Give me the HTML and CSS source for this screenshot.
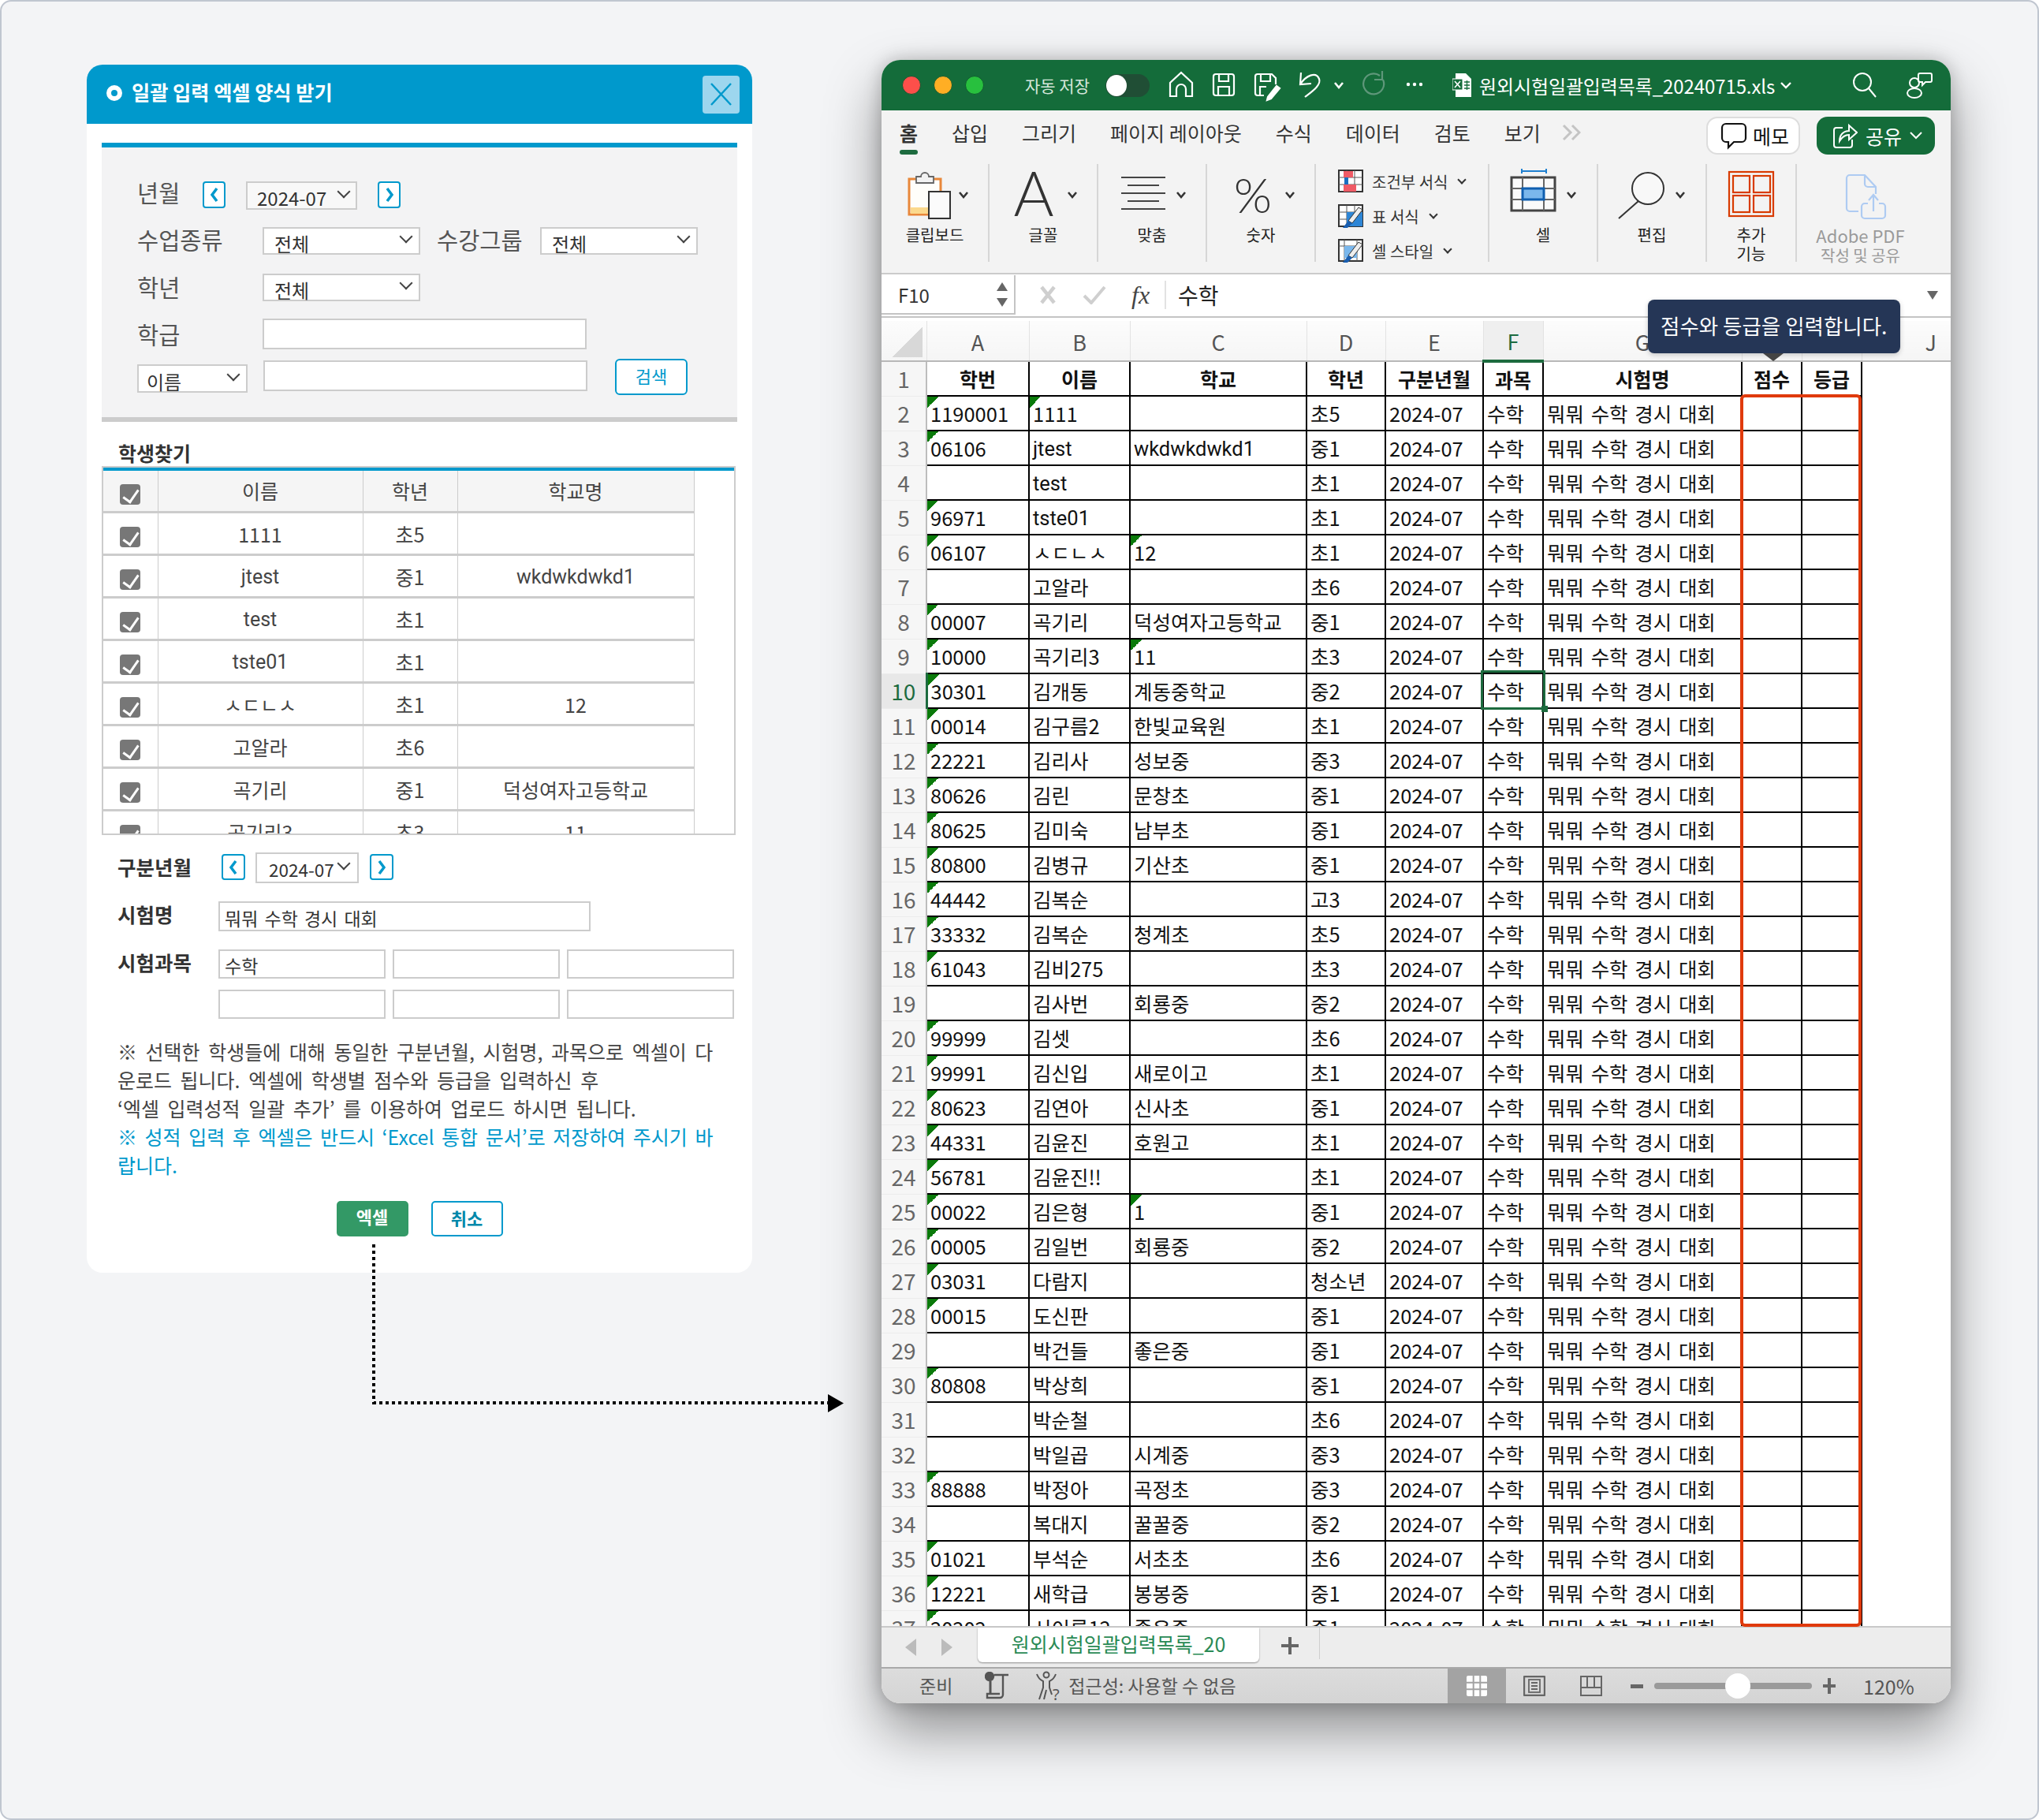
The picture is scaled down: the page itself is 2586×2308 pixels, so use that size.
FILE: index.html
```html
<!DOCTYPE html>
<html>
<head>
	<meta charset="UTF-8">
	<title>일괄 입력 엑셀 양식</title>
	<link rel="stylesheet" href="styles.css">
</head>
<body>
<div class="page">

	<!-- 왼쪽: 엑셀 양식 받기 팝업 -->
	<div class="dialog">
		<div class="dlg-head">
			<i class="dlg-dot"></i>
			<span class="dlg-title">일괄 입력 엑셀 양식 받기</span>
			<span class="dlg-close">
				<svg width="31" height="31" viewBox="0 0 31 31"><path d="M3 2 L28 29 M28 2 L3 29" stroke="#0099cc" stroke-width="2.5" fill="none"/></svg>
			</span>
		</div>

		<div class="search">
			<div class="frow">
				<label class="lab lab-ym">년월</label>
				<a class="nav-btn">
					<svg width="14" height="22" viewBox="0 0 14 22"><path d="M10 3 L4 11 L10 19" stroke="#0099cc" stroke-width="3.5" fill="none"/></svg>
				</a>
				<div class="sel sel-ym"><span>2024-07</span></div>
				<a class="nav-btn nav-next">
					<svg width="14" height="22" viewBox="0 0 14 22"><path d="M4 3 L10 11 L4 19" stroke="#0099cc" stroke-width="3.5" fill="none"/></svg>
				</a>
			</div>
			<div class="frow">
				<label class="lab lab-wide">수업종류</label>
				<div class="sel sel-md"><span>전체</span></div>
				<label class="lab lab-group">수강그룹</label>
				<div class="sel sel-md"><span>전체</span></div>
			</div>
			<div class="frow">
				<label class="lab lab-wide">학년</label>
				<div class="sel sel-md"><span>전체</span></div>
			</div>
			<div class="frow">
				<label class="lab lab-wide">학급</label>
				<div class="inp inp-search"></div>
			</div>
			<div class="frow">
				<div class="sel sel-name"><span>이름</span></div>
				<div class="inp inp-search inp-name"></div>
				<a class="btn-search">검색</a>
			</div>
		</div>

		<div class="sec-title">학생찾기</div>
		<div class="finder">
			<table>
				<colgroup><col class="c-chk"><col class="c-name"><col class="c-grade"><col class="c-school"></colgroup>
				<thead>
					<tr><th><i class="cb"></i></th><th>이름</th><th>학년</th><th>학교명</th></tr>
				</thead>
				<tbody>
					<tr><td><i class="cb"></i></td><td>1111</td><td>초5</td><td></td></tr>
					<tr><td><i class="cb"></i></td><td><span class="lat">jtest</span></td><td>중1</td><td><span class="lat">wkdwkdwkd1</span></td></tr>
					<tr><td><i class="cb"></i></td><td><span class="lat">test</span></td><td>초1</td><td></td></tr>
					<tr><td><i class="cb"></i></td><td><span class="lat">tste01</span></td><td>초1</td><td></td></tr>
					<tr><td><i class="cb"></i></td><td>ㅅㄷㄴㅅ</td><td>초1</td><td>12</td></tr>
					<tr><td><i class="cb"></i></td><td>고알라</td><td>초6</td><td></td></tr>
					<tr><td><i class="cb"></i></td><td>곡기리</td><td>중1</td><td>덕성여자고등학교</td></tr>
					<tr><td><i class="cb"></i></td><td>곡기리3</td><td>초3</td><td>11</td></tr>
				</tbody>
			</table>
		</div>

		<div class="send">
			<div class="srow srow-ym">
				<label class="slab">구분년월</label>
				<a class="nav-btn nav-sm">
					<svg width="14" height="22" viewBox="0 0 14 22"><path d="M10 3 L4 11 L10 19" stroke="#0099cc" stroke-width="3.5" fill="none"/></svg>
				</a>
				<div class="sel sel-ym2"><span>2024-07</span></div>
				<a class="nav-btn nav-sm nav-next2">
					<svg width="14" height="22" viewBox="0 0 14 22"><path d="M4 3 L10 11 L4 19" stroke="#0099cc" stroke-width="3.5" fill="none"/></svg>
				</a>
			</div>
			<div class="srow srow-exam">
				<label class="slab slab-in">시험명</label>
				<div class="inp inp-exam">뭐뭐 수학 경시 대회</div>
			</div>
			<div class="srow srow-sub">
				<label class="slab slab-in">시험과목</label>
				<div class="sub-grid">
					<div class="inp inp-sub">수학</div>
					<div class="inp inp-sub"></div>
					<div class="inp inp-sub"></div>
					<div class="inp inp-sub"></div>
					<div class="inp inp-sub"></div>
					<div class="inp inp-sub"></div>
				</div>
			</div>
			<p class="note">※ 선택한 학생들에 대해 동일한 구분년월, 시험명, 과목으로 엑셀이 다<br>운로드 됩니다. 엑셀에 학생별 점수와 등급을 입력하신 후<br>‘엑셀 입력성적 일괄 추가’ 를 이용하여 업로드 하시면 됩니다.<br><span class="note-blue">※ 성적 입력 후 엑셀은 반드시 ‘Excel 통합 문서’로 저장하여 주시기 바<br>랍니다.</span></p>
			<div class="btns">
				<a class="btn btn-xls">엑셀</a>
				<a class="btn btn-cancel">취소</a>
			</div>
		</div>
	</div>

	<!-- 오른쪽: 엑셀 창 -->
	<div class="win">
		<div class="titlebar">
			<i class="light l-red"></i><i class="light l-yel"></i><i class="light l-grn"></i>
			<span class="autosave">자동 저장</span>
			<span class="toggle"><i></i></span>
			<svg class="qat" width="340" height="64" viewBox="0 0 340 64" fill="none" stroke="#fff" stroke-width="2.2">
				<path d="M4 46 V29 L18 16 L32 29 V46 H24 V37 a6 6 0 0 0 -12 0 V46 Z"/>
				<rect x="59" y="18" width="26" height="27" rx="3"/>
				<path d="M66 18 V27 H78 V18 M65 45 V34 H79 V45"/>
				<path d="M123 45 H115 a3 3 0 0 1 -3 -3 V21 a3 3 0 0 1 3 -3 H133 l5 5 V31 M119 18 V27 H131 V18 M118 45 V34 H126"/>
				<path d="M128 47 L139 33 L143 36 L132 49 L127 51 Z" fill="#fff"/>
				<path d="M170 16 L169 31 L183 30 M169 31 C176 20 189 14 193 24 C196 32 184 40 175 47"/>
				<path d="M213 29 l5 6 5-6" stroke-width="2.6"/>
				<path d="M270 20 a13 13 0 1 0 4 5 M273 14 V25 H263" stroke="#5f977a"/>
				<circle cx="306" cy="31" r="2.2" fill="#fff" stroke="none"/><circle cx="314" cy="31" r="2.2" fill="#fff" stroke="none"/><circle cx="322" cy="31" r="2.2" fill="#fff" stroke="none"/>
			</svg>
			<svg class="xlfile" width="24" height="30" viewBox="0 0 24 30">
				<path d="M4 0 H17 L24 7 V30 H4 Z" fill="#fff"/>
				<rect x="0" y="7" width="13" height="14" fill="#146c3a" stroke="#fff"/>
				<path d="M3 10 L10 18 M10 10 L3 18" stroke="#fff" stroke-width="1.6"/>
				<path d="M15 11 H22 M15 15 H22 M15 19 H22 M18.500 9 V21" stroke="#146c3a" stroke-width="1.3"/>
			</svg>
			<span class="filename">원외시험일괄입력목록_20240715.xls</span>
			<svg class="fchev" width="16" height="10" viewBox="0 0 16 10"><path d="M2 2 L8 8 L14 2" stroke="#fff" stroke-width="2.4" fill="none"/></svg>
			<svg class="tsearch" width="32" height="34" viewBox="0 0 32 34" fill="none" stroke="#fff" stroke-width="2"><circle cx="13" cy="13" r="11"/><path d="M21 21 L30 32"/></svg>
			<svg class="tperson" width="34" height="34" viewBox="0 0 34 34" fill="none" stroke="#fff" stroke-width="2"><circle cx="11" cy="14" r="6"/><path d="M2 27 a9 6 0 0 1 18 0 a9 6 0 0 1 -18 0 Z"/><path d="M18 2 H31 a2 2 0 0 1 2 2 V11 a2 2 0 0 1 -2 2 H25 L21 17 V13 H18 a2 2 0 0 1 -2 -2 V4 a2 2 0 0 1 2 -2 Z"/></svg>
		</div>

		<div class="ribbon">
			<div class="tabs">
				<span class="tab tab-on">홈</span>
				<span class="tab">삽입</span>
				<span class="tab">그리기</span>
				<span class="tab">페이지 레이아웃</span>
				<span class="tab">수식</span>
				<span class="tab">데이터</span>
				<span class="tab">검토</span>
				<span class="tab">보기</span>
				<svg class="tab-more" width="24" height="40" viewBox="0 0 24 40" fill="none" stroke="#c4c4c4" stroke-width="3"><path d="M2 11 L11 20 L2 29 M13 11 L22 20 L13 29"/></svg>
				<a class="memo">
					<svg width="34" height="36" viewBox="0 0 34 36" fill="none" stroke="#111" stroke-width="2.2"><path d="M7 3 H27 a5 5 0 0 1 5 5 V21 a5 5 0 0 1 -5 5 H17 L10 33 V26 H7 a5 5 0 0 1 -5 -5 V8 a5 5 0 0 1 5 -5 Z"/></svg>
					메모
				</a>
				<a class="share">
					<svg width="32" height="34" viewBox="0 0 32 34" fill="none" stroke="#fff" stroke-width="2"><path d="M13 7 H5 a3 3 0 0 0 -3 3 V29 a3 3 0 0 0 3 3 H22 a3 3 0 0 0 3 -3 V22"/><path d="M9 24 C9 16 14 11 21 11 V4 L31 13 L21 22 V16 C15 16 12 19 9 24 Z"/></svg>
					공유
					<svg width="16" height="10" viewBox="0 0 16 10"><path d="M1 1 L8 8 L15 1" stroke="#fff" stroke-width="2" fill="none"/></svg>
				</a>
			</div>
			<div class="groups">
				<div class="grp g-137">
					<svg width="137" height="78" viewBox="0 0 137 78" fill="none">
						<path d="M35 19 H75 V64 H35 Z" fill="#fffefa" stroke="#e8873a" stroke-width="3"/>
						<rect x="37" y="55" width="24" height="8" fill="#fbd98d"/>
						<path d="M44 24 V16 H50 a5 5 0 0 1 10 0 H66 V24 Z" fill="#f2f2f2" stroke="#666" stroke-width="1.8"/>
						<rect x="60" y="35" width="27" height="34" fill="#fbfbfb" stroke="#333" stroke-width="2"/>
						<path class="chev" d="M99 36 l5 6 5-6"/>
					</svg>
					<span class="grp-lab">클립보드</span>
				</div>
				<div class="grp g-138">
					<svg width="138" height="78" viewBox="0 0 138 78" fill="none">
						<text class="rb-glyph" x="56" y="66" font-size="78" text-anchor="middle">A</text>
						<path class="chev" d="M100 36 l5 6 5-6"/>
					</svg>
					<span class="grp-lab">글꼴</span>
				</div>
				<div class="grp g-138">
					<svg width="138" height="78" viewBox="0 0 138 78" fill="none" stroke="#444" stroke-width="2">
						<path d="M29 17 H85 M37 27 H77 M29 37 H85 M37 47 H77 M29 57 H85"/>
						<path class="chev" d="M100 36 l5 6 5-6"/>
					</svg>
					<span class="grp-lab">맞춤</span>
				</div>
				<div class="grp g-138">
					<svg width="138" height="78" viewBox="0 0 138 78" fill="none">
						<text class="rb-glyph" x="58" y="62" font-size="62" text-anchor="middle">%</text>
						<path class="chev" d="M100 36 l5 6 5-6"/>
					</svg>
					<span class="grp-lab">숫자</span>
				</div>
				<div class="grp g-styles">
					<div class="st-row">
						<svg width="32" height="30" viewBox="0 0 32 30" fill="none"><rect x="1" y="1" width="30" height="27" fill="#fff" stroke="#333" stroke-width="2"/><path d="M11 1 V28 M21 1 V28 M1 10 H31 M1 19 H31" stroke="#555"/><rect x="7" y="2" width="12" height="8" fill="#ef5b66"/><rect x="7" y="19" width="16" height="9" fill="#ef5b66"/><rect x="8" y="10" width="5" height="9" fill="#1a6fc0"/></svg>
						<span>조건부 서식</span><i class="vv"></i>
					</div>
					<div class="st-row">
						<svg width="32" height="30" viewBox="0 0 32 30" fill="none"><rect x="1" y="1" width="30" height="27" fill="#fff" stroke="#333" stroke-width="2"/><path d="M11 1 V28 M21 1 V28 M1 10 H31 M1 19 H31" stroke="#555"/><path d="M11 28 V10 H31 V28 Z" fill="#2e86d6"/><path d="M26 4 L31 7 L18 24 L13 21 Z" fill="#eee" stroke="#333"/><path d="M13 21 L18 24 L12 30 H6 Z" fill="#1a5fb0"/></svg>
						<span>표 서식</span><i class="vv"></i>
					</div>
					<div class="st-row">
						<svg width="32" height="30" viewBox="0 0 32 30" fill="none"><rect x="1" y="1" width="30" height="27" fill="#fff" stroke="#333" stroke-width="2"/><path d="M1 9 H31 M8 1 V28 M24 1 V28" stroke="#555"/><path d="M8 9 H24 V24 H8 Z" fill="#7ab7ec"/><path d="M26 4 L31 7 L18 24 L13 21 Z" fill="#eee" stroke="#333"/><path d="M13 21 L18 24 L12 30 H6 Z" fill="#1a5fb0"/></svg>
						<span>셀 스타일</span><i class="vv"></i>
					</div>
				</div>
				<div class="grp g-138">
					<svg width="138" height="78" viewBox="0 0 138 78" fill="none">
						<path d="M41 9 H72 M41 6 V12 M72 6 V12" stroke="#1e7fd0" stroke-width="2"/>
						<rect x="28" y="17" width="55" height="42" fill="#fafafa" stroke="#444" stroke-width="3"/>
						<path d="M42 17 V59 M69 17 V59 M28 31 H83 M28 45 H83" stroke="#666" stroke-width="2"/>
						<rect x="42" y="31" width="27" height="14" fill="#7ab7ec" stroke="#0f5fb0" stroke-width="3"/>
						<path class="chev" d="M99 36 l5 6 5-6"/>
					</svg>
					<span class="grp-lab">셀</span>
				</div>
				<div class="grp g-138">
					<svg width="138" height="78" viewBox="0 0 138 78" fill="none">
						<ellipse cx="63" cy="31" rx="20" ry="20" fill="#f8f8f8" stroke="#333" stroke-width="2"/>
						<path d="M51 47 L26 69" stroke="#333" stroke-width="2"/>
						<path class="chev" d="M99 36 l5 6 5-6"/>
					</svg>
					<span class="grp-lab">편집</span>
				</div>
				<div class="grp g-114">
					<svg width="114" height="78" viewBox="0 0 114 78" fill="none" stroke="#d83b01" stroke-width="2.2">
						<rect x="28" y="10" width="56" height="56"/>
						<rect x="33" y="15" width="21" height="21"/><rect x="59" y="15" width="21" height="21"/>
						<rect x="33" y="40" width="21" height="21"/><rect x="59" y="40" width="21" height="21"/>
					</svg>
					<span class="grp-lab">추가<br>기능</span>
				</div>
				<div class="grp g-last">
					<svg width="195" height="78" viewBox="0 0 195 78" fill="none" stroke="#aecbf2" stroke-width="2.2">
						<path d="M78 60 H67 a4 4 0 0 1 -4 -4 V18 a4 4 0 0 1 4 -4 H86 L100 29 V38"/>
						<path d="M86 14 V25 a4 4 0 0 0 4 4 H100"/>
						<path d="M90 50 H86 a4 4 0 0 0 -4 4 V65 a4 4 0 0 0 4 4 H108 a4 4 0 0 0 4 -4 V54 a4 4 0 0 0 -4 -4 H104"/>
						<path d="M97 60 V40 M91 46 L97 39 L103 46"/>
					</svg>
					<span class="grp-lab grp-dim"><span class="grp-en">Adobe PDF</span><br>작성 및 공유</span>
				</div>
			</div>
		</div>

		<div class="fbar">
			<div class="namebox">
				<span>F10</span>
				<span class="spin"><i class="tri-up"></i><i class="tri-down"></i></span>
			</div>
			<svg class="fb-x" width="20" height="24" viewBox="0 0 20 24"><path d="M2 2 L18 22 M18 2 L2 22" stroke="#cfcfcf" stroke-width="4.5" fill="none"/></svg>
			<svg class="fb-ok" width="30" height="24" viewBox="0 0 30 24"><path d="M2 13 L11 22 L28 2" stroke="#cfcfcf" stroke-width="4" fill="none"/></svg>
			<span class="fx">fx</span>
			<span class="fval">수학</span>
			<i class="tri-down tri-fb"></i>
		</div>

		<div class="sheet-wrap">
			<div class="sheet">
				<table class="grid">
					<colgroup><col class="w-rn"><col class="w-a"><col class="w-b"><col class="w-c"><col class="w-d"><col class="w-e"><col class="w-f"><col class="w-g"><col class="w-h"><col class="w-i"><col class="w-j"></colgroup>
					<thead>
						<tr><th class="corner"><i></i></th><th>A</th><th>B</th><th>C</th><th>D</th><th>E</th><th class="col-on">F</th><th>G</th><th></th><th></th><th class="col-j">J</th></tr>
					</thead>
					<tbody>
						<tr class="hd"><th class="rn">1</th><td>학번</td><td>이름</td><td>학교</td><td>학년</td><td>구분년월</td><td>과목</td><td>시험명</td><td>점수</td><td>등급</td><td class="j"></td></tr>
						<tr><th class="rn">2</th><td class="f">1190001</td><td class="f">1111</td><td></td><td>초5</td><td>2024-07</td><td>수학</td><td>뭐뭐 수학 경시 대회</td><td></td><td></td><td class="j"></td></tr>
						<tr><th class="rn">3</th><td class="f">06106</td><td><span class="lat">jtest</span></td><td><span class="lat">wkdwkdwkd1</span></td><td>중1</td><td>2024-07</td><td>수학</td><td>뭐뭐 수학 경시 대회</td><td></td><td></td><td class="j"></td></tr>
						<tr><th class="rn">4</th><td></td><td><span class="lat">test</span></td><td></td><td>초1</td><td>2024-07</td><td>수학</td><td>뭐뭐 수학 경시 대회</td><td></td><td></td><td class="j"></td></tr>
						<tr><th class="rn">5</th><td class="f">96971</td><td><span class="lat">tste01</span></td><td></td><td>초1</td><td>2024-07</td><td>수학</td><td>뭐뭐 수학 경시 대회</td><td></td><td></td><td class="j"></td></tr>
						<tr><th class="rn">6</th><td class="f">06107</td><td>ㅅㄷㄴㅅ</td><td class="f">12</td><td>초1</td><td>2024-07</td><td>수학</td><td>뭐뭐 수학 경시 대회</td><td></td><td></td><td class="j"></td></tr>
						<tr><th class="rn">7</th><td></td><td>고알라</td><td></td><td>초6</td><td>2024-07</td><td>수학</td><td>뭐뭐 수학 경시 대회</td><td></td><td></td><td class="j"></td></tr>
						<tr><th class="rn">8</th><td class="f">00007</td><td>곡기리</td><td>덕성여자고등학교</td><td>중1</td><td>2024-07</td><td>수학</td><td>뭐뭐 수학 경시 대회</td><td></td><td></td><td class="j"></td></tr>
						<tr><th class="rn">9</th><td class="f">10000</td><td>곡기리3</td><td class="f">11</td><td>초3</td><td>2024-07</td><td>수학</td><td>뭐뭐 수학 경시 대회</td><td></td><td></td><td class="j"></td></tr>
						<tr><th class="rn rn-on">10</th><td class="f">30301</td><td>김개동</td><td>계동중학교</td><td>중2</td><td>2024-07</td><td>수학</td><td>뭐뭐 수학 경시 대회</td><td></td><td></td><td class="j"></td></tr>
						<tr><th class="rn">11</th><td class="f">00014</td><td>김구름2</td><td>한빛교육원</td><td>초1</td><td>2024-07</td><td>수학</td><td>뭐뭐 수학 경시 대회</td><td></td><td></td><td class="j"></td></tr>
						<tr><th class="rn">12</th><td class="f">22221</td><td>김리사</td><td>성보중</td><td>중3</td><td>2024-07</td><td>수학</td><td>뭐뭐 수학 경시 대회</td><td></td><td></td><td class="j"></td></tr>
						<tr><th class="rn">13</th><td class="f">80626</td><td>김린</td><td>문창초</td><td>중1</td><td>2024-07</td><td>수학</td><td>뭐뭐 수학 경시 대회</td><td></td><td></td><td class="j"></td></tr>
						<tr><th class="rn">14</th><td class="f">80625</td><td>김미숙</td><td>남부초</td><td>중1</td><td>2024-07</td><td>수학</td><td>뭐뭐 수학 경시 대회</td><td></td><td></td><td class="j"></td></tr>
						<tr><th class="rn">15</th><td class="f">80800</td><td>김병규</td><td>기산초</td><td>중1</td><td>2024-07</td><td>수학</td><td>뭐뭐 수학 경시 대회</td><td></td><td></td><td class="j"></td></tr>
						<tr><th class="rn">16</th><td class="f">44442</td><td>김복순</td><td></td><td>고3</td><td>2024-07</td><td>수학</td><td>뭐뭐 수학 경시 대회</td><td></td><td></td><td class="j"></td></tr>
						<tr><th class="rn">17</th><td class="f">33332</td><td>김복순</td><td>청계초</td><td>초5</td><td>2024-07</td><td>수학</td><td>뭐뭐 수학 경시 대회</td><td></td><td></td><td class="j"></td></tr>
						<tr><th class="rn">18</th><td class="f">61043</td><td>김비275</td><td></td><td>초3</td><td>2024-07</td><td>수학</td><td>뭐뭐 수학 경시 대회</td><td></td><td></td><td class="j"></td></tr>
						<tr><th class="rn">19</th><td></td><td>김사번</td><td>회룡중</td><td>중2</td><td>2024-07</td><td>수학</td><td>뭐뭐 수학 경시 대회</td><td></td><td></td><td class="j"></td></tr>
						<tr><th class="rn">20</th><td class="f">99999</td><td>김셋</td><td></td><td>초6</td><td>2024-07</td><td>수학</td><td>뭐뭐 수학 경시 대회</td><td></td><td></td><td class="j"></td></tr>
						<tr><th class="rn">21</th><td class="f">99991</td><td>김신입</td><td>새로이고</td><td>초1</td><td>2024-07</td><td>수학</td><td>뭐뭐 수학 경시 대회</td><td></td><td></td><td class="j"></td></tr>
						<tr><th class="rn">22</th><td class="f">80623</td><td>김연아</td><td>신사초</td><td>중1</td><td>2024-07</td><td>수학</td><td>뭐뭐 수학 경시 대회</td><td></td><td></td><td class="j"></td></tr>
						<tr><th class="rn">23</th><td class="f">44331</td><td>김윤진</td><td>호원고</td><td>초1</td><td>2024-07</td><td>수학</td><td>뭐뭐 수학 경시 대회</td><td></td><td></td><td class="j"></td></tr>
						<tr><th class="rn">24</th><td class="f">56781</td><td>김윤진!!</td><td></td><td>초1</td><td>2024-07</td><td>수학</td><td>뭐뭐 수학 경시 대회</td><td></td><td></td><td class="j"></td></tr>
						<tr><th class="rn">25</th><td class="f">00022</td><td>김은형</td><td class="f">1</td><td>중1</td><td>2024-07</td><td>수학</td><td>뭐뭐 수학 경시 대회</td><td></td><td></td><td class="j"></td></tr>
						<tr><th class="rn">26</th><td class="f">00005</td><td>김일번</td><td>회룡중</td><td>중2</td><td>2024-07</td><td>수학</td><td>뭐뭐 수학 경시 대회</td><td></td><td></td><td class="j"></td></tr>
						<tr><th class="rn">27</th><td class="f">03031</td><td>다람지</td><td></td><td>청소년</td><td>2024-07</td><td>수학</td><td>뭐뭐 수학 경시 대회</td><td></td><td></td><td class="j"></td></tr>
						<tr><th class="rn">28</th><td class="f">00015</td><td>도신판</td><td></td><td>중1</td><td>2024-07</td><td>수학</td><td>뭐뭐 수학 경시 대회</td><td></td><td></td><td class="j"></td></tr>
						<tr><th class="rn">29</th><td></td><td>박건들</td><td>좋은중</td><td>중1</td><td>2024-07</td><td>수학</td><td>뭐뭐 수학 경시 대회</td><td></td><td></td><td class="j"></td></tr>
						<tr><th class="rn">30</th><td class="f">80808</td><td>박상희</td><td></td><td>중1</td><td>2024-07</td><td>수학</td><td>뭐뭐 수학 경시 대회</td><td></td><td></td><td class="j"></td></tr>
						<tr><th class="rn">31</th><td></td><td>박순철</td><td></td><td>초6</td><td>2024-07</td><td>수학</td><td>뭐뭐 수학 경시 대회</td><td></td><td></td><td class="j"></td></tr>
						<tr><th class="rn">32</th><td></td><td>박일곱</td><td>시계중</td><td>중3</td><td>2024-07</td><td>수학</td><td>뭐뭐 수학 경시 대회</td><td></td><td></td><td class="j"></td></tr>
						<tr><th class="rn">33</th><td class="f">88888</td><td>박정아</td><td>곡정초</td><td>중3</td><td>2024-07</td><td>수학</td><td>뭐뭐 수학 경시 대회</td><td></td><td></td><td class="j"></td></tr>
						<tr><th class="rn">34</th><td></td><td>복대지</td><td>꿀꿀중</td><td>중2</td><td>2024-07</td><td>수학</td><td>뭐뭐 수학 경시 대회</td><td></td><td></td><td class="j"></td></tr>
						<tr><th class="rn">35</th><td class="f">01021</td><td>부석순</td><td>서초초</td><td>초6</td><td>2024-07</td><td>수학</td><td>뭐뭐 수학 경시 대회</td><td></td><td></td><td class="j"></td></tr>
						<tr><th class="rn">36</th><td class="f">12221</td><td>새학급</td><td>봉봉중</td><td>중1</td><td>2024-07</td><td>수학</td><td>뭐뭐 수학 경시 대회</td><td></td><td></td><td class="j"></td></tr>
						<tr><th class="rn">37</th><td class="f">20202</td><td>시이름12</td><td>좋은중</td><td>중1</td><td>2024-07</td><td>수학</td><td>뭐뭐 수학 경시 대회</td><td></td><td></td><td class="j"></td></tr>
					</tbody>
				</table>
			</div>
			<div class="sel-cell"><i></i></div>
			<div class="red-box"></div>
			<div class="tip">점수와 등급을 입력합니다.</div>
		</div>

		<div class="sheetbar">
			<i class="sb-prev"></i><i class="sb-next"></i>
			<span class="sheet-tab">원외시험일괄입력목록_20</span>
			<svg class="sb-plus" width="22" height="22" viewBox="0 0 22 22"><path d="M11 0 V22 M0 11 H22" stroke="#666" stroke-width="4"/></svg>
			<i class="sb-line"></i>
		</div>

		<div class="status">
			<span class="st-ready">준비</span>
			<svg class="st-macro" width="32" height="36" viewBox="0 0 32 36" fill="none" stroke="#555" stroke-width="2.4"><circle cx="6" cy="6" r="5" fill="#555"/><path d="M12 4 H30 M23 4 V29 a4 4 0 0 1 -4 4 H3 V28 H19"/><path d="M7 12 V27" stroke-width="3"/></svg>
			<svg class="st-acc" width="34" height="38" viewBox="0 0 34 38" fill="none" stroke="#555" stroke-width="2"><circle cx="14" cy="5" r="3.5"/><path d="M2 4 C5 12 9 12 10 13 V21 L5 36 M26 4 C23 12 19 12 18 13 V21 L21 30 M14 24 L11 36"/><text class="st-q" x="22" y="37" font-size="20">?</text></svg>
			<span class="st-text">접근성: 사용할 수 없음</span>
			<span class="vw vw-on">
				<svg width="26" height="26" viewBox="0 0 26 26"><rect x="0" y="0" width="26" height="26" rx="2" fill="#fff"/><path d="M8.7 0 V26 M17.3 0 V26 M0 8.7 H26 M0 17.3 H26" stroke="#a3a3a3" stroke-width="2"/></svg>
			</span>
			<span class="vw">
				<svg width="28" height="26" viewBox="0 0 28 26" fill="none" stroke="#666" stroke-width="2.4"><rect x="1" y="1" width="26" height="24" rx="1"/><rect x="7" y="5" width="14" height="16" stroke-width="1.8"/><path d="M10 9 H18 M10 13 H18 M10 17 H18" stroke-width="1.8"/></svg>
			</span>
			<span class="vw">
				<svg width="28" height="26" viewBox="0 0 28 26" fill="none" stroke="#666" stroke-width="2"><rect x="1" y="1" width="26" height="24"/><path d="M1 15 H27 M9 1 V15 M18 1 V15"/></svg>
			</span>
			<i class="zm-minus"></i>
			<span class="zm-track"><i class="zm-knob"></i></span>
			<svg class="zm-plus" width="16" height="20" viewBox="0 0 16 20"><path d="M8 0 V20 M0 10 H16" stroke="#666" stroke-width="4"/></svg>
			<span class="zm-val">120%</span>
		</div>
	</div>

	<!-- 엑셀 버튼에서 창으로 이어지는 점선 -->
	<svg class="flow" width="604" height="220" viewBox="0 0 604 220">
		<path d="M4 3 V204 H580" fill="none" stroke="#000" stroke-width="4" stroke-dasharray="4 4"/>
		<polygon points="580,193 600,204.5 580,216" fill="#000"/>
	</svg>
</div>
</body>
</html>
```

FILE: styles.css
```css
* {
	margin: 0;
	padding: 0;
	box-sizing: border-box;
}

body {
	background: #fff;
	font-family: "Noto Sans CJK KR", "Noto Sans", sans-serif;
	color: #444;
	overflow: hidden;
}

i {
	font-style: normal;
}

.lat {
	font-family: Roboto, "Noto Sans", sans-serif;
}

.page {
	position: relative;
	display: flex;
	align-items: flex-start;
	width: 2586px;
	height: 2308px;
	padding-left: 108px;
	background: #f3f4f6;
	border: 2px solid #c0c6d0;
	border-radius: 14px;
}

/* ---- 팝업 ---- */
.dialog {
	width: 844px;
	height: 1532px;
	margin-top: 80px;
	background: #fff;
	border-radius: 20px;
}

.dlg-head {
	display: flex;
	align-items: center;
	height: 75px;
	padding: 0 16px 0 25px;
	background: #0099cc;
	border-radius: 20px 20px 0 0;
	color: #fff;
}

.dlg-dot {
	width: 20px;
	height: 20px;
	margin: -4px 12px 0 0;
	border: 6px solid #fff;
	border-radius: 50%;
}

.dlg-title {
	margin-top: -7px;
	font-size: 25.2px;
	font-weight: 700;
}

.dlg-close {
	display: flex;
	align-items: center;
	justify-content: center;
	width: 47px;
	height: 48px;
	margin-left: auto;
	background: #9dd6ee;
	border-radius: 4px;
}

.search {
	display: grid;
	grid-template-rows: 58px 59px 57px 51px 46px;
	height: 354px;
	margin: 24px 19px 0;
	padding: 43px 0 0 45px;
	background: #f3f3f4;
	border-top: 6px solid #0099cc;
	border-bottom: 6px solid #ccc;
}

.frow {
	display: flex;
	align-items: flex-start;
}

.lab {
	font-size: 29.5px;
	font-weight: 400;
	line-height: 31px;
	color: #555;
	white-space: nowrap;
}

.frow:nth-child(1) .lab { line-height: 27px; }
.frow:nth-child(3) .lab { line-height: 33px; }
.frow:nth-child(4) .lab { line-height: 39px; }

.lab-ym { width: 83px; }
.lab-wide { width: 159px; }
.lab-group { width: 131px; margin-left: 21px; }

.nav-btn {
	display: flex;
	align-items: center;
	justify-content: center;
	width: 29px;
	height: 34px;
	background: #fff;
	border: 2px solid #0099cc;
	border-radius: 4px;
}

.nav-next { margin-left: 26px; }

.sel {
	display: flex;
	align-items: center;
	background: #fff;
	border: 2px solid #ccc;
	color: #333;
	font-size: 24px;
}

.sel::after {
	content: "";
	width: 10px;
	height: 10px;
	margin-left: auto;
	border-right: 2px solid #444;
	border-bottom: 2px solid #444;
	transform: rotate(45deg);
}

.sel-ym {
	width: 141px;
	height: 36px;
	margin-left: 26px;
	padding: 6px 9px 0 12px;
	background: #f8f8f8;
	line-height: 26px;
}

.sel-ym::after { margin-top: -16px; }

.sel-md {
	width: 200px;
	height: 35px;
	padding: 7px 10px 0 13px;
	line-height: 24px;
}

.sel-md::after { margin-top: -18px; }

.sel-name {
	width: 140px;
	height: 36px;
	margin: 7px 20px 0 0;
	padding: 7px 10px 0 10px;
	line-height: 25px;
}

.sel-name::after { margin-top: -18px; }

.inp {
	background: #fff;
	border: 2px solid #ccc;
	color: #333;
}

.inp-search {
	width: 411px;
	height: 39px;
}

.inp-name { margin-top: 2px; }

.btn-search {
	width: 92px;
	height: 46px;
	margin-left: 35px;
	background: #fff;
	border: 2px solid #0099cc;
	border-radius: 6px;
	color: #0099cc;
	font-size: 22px;
	line-height: 38px;
	text-align: center;
}

.sec-title {
	height: 34px;
	margin: 22px 0 0 40px;
	font-size: 25px;
	font-weight: 700;
	line-height: 34px;
	color: #333;
}

.finder {
	width: 804px;
	height: 468px;
	margin-left: 19px;
	border: 2px solid #ccc;
	overflow: hidden;
}

.finder::before {
	content: "";
	position: relative;
	z-index: 1;
	display: block;
	height: 4px;
	margin-bottom: -2px;
	background: #0099cc;
}

.finder table {
	width: 749px;
	table-layout: fixed;
	border-collapse: collapse;
	font-size: 25px;
	color: #444;
}

.c-chk { width: 69px; }
.c-name { width: 260px; }
.c-grade { width: 120px; }
.c-school { width: 300px; }

.finder th,
.finder td {
	height: 54px;
	padding: 0;
	border: 1px solid #ccc;
	border-bottom: 3px solid #ccc;
	text-align: center;
	font-weight: 400;
	line-height: 34px;
	white-space: nowrap;
}

.finder tr > :first-child { border-left: 0; }

.finder thead th {
	background: #f5f5f5;
}

.cb {
	position: relative;
	display: inline-block;
	width: 26px;
	height: 26px;
	margin-top: 2px;
	background: #777;
	border-radius: 4px;
	vertical-align: middle;
}

.cb::after {
	content: "";
	position: absolute;
	left: 8px;
	top: 3px;
	width: 9px;
	height: 17px;
	border-right: 3px solid #fff;
	border-bottom: 3px solid #fff;
	transform: rotate(35deg);
}

.send {
	padding: 22px 0 0 39px;
}

.srow {
	display: flex;
	align-items: flex-start;
}

.srow-ym { height: 40px; }
.srow-exam { margin-top: 22px; }
.srow-sub { margin-top: 23px; }

.slab {
	width: 132px;
	font-size: 25.5px;
	font-weight: 700;
	line-height: 36px;
	color: #333;
	white-space: nowrap;
}

.slab-in {
	width: 128px;
	line-height: 32px;
}

.nav-sm {
	width: 30px;
	height: 33px;
	margin-top: 2px;
}

.sel-ym2 {
	width: 131px;
	height: 39px;
	margin-left: 13px;
	padding: 3px 11px 0 15px;
	font-size: 22.5px;
	line-height: 30px;
}

.sel-ym2::after { margin-top: -14px; }

.nav-next2 { margin-left: 14px; }

.inp-exam,
.inp-sub {
	padding: 4px 0 0 6px;
	font-size: 23px;
	word-spacing: 3px;
}

.inp-exam {
	width: 472px;
	height: 38px;
	line-height: 30px;
}

.inp-sub {
	line-height: 29px;
}

.sub-grid {
	display: grid;
	grid-template-columns: repeat(3, 212px);
	grid-auto-rows: 37px;
	gap: 14px 9px;
}

.note {
	margin-top: 23px;
	font-size: 25px;
	line-height: 36px;
	word-spacing: 5px;
	color: #444;
	white-space: nowrap;
}

.note-blue {
	color: #0099cc;
	word-spacing: 4px;
}

.btns {
	display: flex;
	justify-content: center;
	gap: 29px;
	margin: 28px 0 0 -39px;
}

.btn {
	width: 91px;
	height: 45px;
	border-radius: 5px;
	font-size: 22px;
	font-weight: 700;
	line-height: 38px;
	text-align: center;
}

.btn-xls {
	background: #339966;
	color: #fff;
}

.btn-cancel {
	background: #fff;
	border: 2px solid #0099cc;
	color: #0088aa;
}

/* ---- 엑셀 창 ---- */
.win {
	display: flex;
	flex-direction: column;
	width: 1356px;
	height: 2084px;
	margin: 74px 0 0 164px;
	background: #fff;
	border-radius: 24px;
	box-shadow: 0 34px 70px rgba(0, 0, 0, .42), 0 0 22px rgba(0, 0, 0, .22);
}

.titlebar {
	display: flex;
	align-items: center;
	flex: none;
	height: 64px;
	padding-left: 26px;
	background: #146c3a;
	border-radius: 24px 24px 0 0;
	color: #fff;
}

.light {
	width: 24px;
	height: 24px;
	margin-right: 16px;
	border-radius: 50%;
}

.l-red { background: #fd4f4a; border: 1px solid #0f5a30; }
.l-yel { background: #ffae24; border: 1px solid #0f5a30; }
.l-grn { background: #28c03e; border: 1px solid #0f5a30; }

.autosave {
	margin-left: 36px;
	font-size: 21px;
	color: #d5e6db;
}

.toggle {
	width: 56px;
	height: 29px;
	margin-left: 20px;
	padding: 1px;
	background: #204e35;
	border-radius: 15px;
}

.toggle i {
	display: block;
	width: 26px;
	height: 27px;
	background: #fff;
	border-radius: 50%;
}

.qat {
	margin-left: 22px;
}

.xlfile {
	margin-left: 22px;
}

.filename {
	margin-left: 10px;
	font-size: 24px;
	letter-spacing: -0.1px;
}

.fchev {
	margin-left: 6px;
}

.tsearch {
	margin-left: auto;
}

.tperson {
	margin: 0 23px 0 36px;
}

.ribbon {
	flex: none;
	height: 208px;
	background: #f3f3f3;
	border-bottom: 2px solid #cbcbcb;
}

.tabs {
	display: flex;
	align-items: flex-start;
	gap: 43px;
	height: 68px;
	padding: 8px 20px 0 23px;
}

.tab {
	font-size: 25px;
	line-height: 40px;
	color: #333;
	white-space: nowrap;
}

.tab-on {
	font-weight: 700;
}

.tab-on::after {
	content: "";
	display: block;
	height: 6px;
	margin-top: 2px;
	background: #1d6b3f;
	border-radius: 3px;
}

.tab-more {
	margin-left: -16px;
}

.memo,
.share {
	display: flex;
	align-items: center;
	height: 48px;
	border-radius: 14px;
	font-size: 25px;
	white-space: nowrap;
}

.memo {
	width: 119px;
	margin-left: auto;
	padding-left: 16px;
	gap: 7px;
	background: #fff;
	border: 2px solid #ddd;
	color: #111;
}

.share {
	width: 150px;
	margin-left: -22px;
	padding-left: 20px;
	gap: 10px;
	background: #146c3a;
	color: #fff;
}

.groups {
	display: flex;
	align-items: flex-start;
}

.grp {
	display: flex;
	flex-direction: column;
	align-items: center;
	height: 124px;
	border-right: 2px solid #d6d6d6;
}

.grp svg {
	flex: none;
	align-self: flex-start;
}

.g-137 { width: 137px; }
.g-138 { width: 138px; }
.g-114 { width: 114px; }
.g-last { width: 195px; padding-right: 34px; border-right: 0; }

.grp-lab {
	font-size: 20px;
	line-height: 24px;
	text-align: center;
	color: #222;
	white-space: nowrap;
}

.grp-dim {
	color: #9a9a9a;
}

.grp-en {
	font-size: 22px;
}

.rb-glyph {
	font-family: Lato, "Noto Sans", sans-serif;
	font-weight: 300;
	fill: #333;
}

.chev {
	stroke: #333;
	stroke-width: 2.6;
	fill: none;
}

.g-styles {
	align-items: flex-start;
	width: 220px;
	padding-left: 28px;
}

.st-row {
	display: flex;
	align-items: center;
	flex: none;
	height: 44px;
	font-size: 20px;
	color: #333;
	white-space: nowrap;
}

.st-row svg {
	align-self: center;
	margin-right: 11px;
}

.vv {
	width: 8px;
	height: 8px;
	margin: -4px 0 0 14px;
	border-right: 2px solid #333;
	border-bottom: 2px solid #333;
	transform: rotate(45deg);
}

.fbar {
	display: flex;
	align-items: center;
	flex: none;
	height: 55px;
	padding-bottom: 1px;
	background: #fff;
	border-bottom: 2px solid #c4c4c4;
}

.namebox {
	display: flex;
	align-items: center;
	width: 170px;
	height: 50px;
	padding: 0 4px 0 21px;
	border-right: 2px solid #c4c4c4;
	border-bottom: 2px solid #c4c4c4;
	font-size: 24px;
	color: #333;
}

.spin {
	display: flex;
	flex-direction: column;
	gap: 9px;
	margin-left: auto;
	margin-right: 4px;
}

.tri-up,
.tri-down {
	display: block;
	width: 0;
	height: 0;
	border-left: 7px solid transparent;
	border-right: 7px solid transparent;
}

.tri-up { border-bottom: 11px solid #666; }
.tri-down { border-top: 11px solid #666; }

.fb-x { margin-left: 31px; }
.fb-ok { margin-left: 34px; }

.fx {
	width: 46px;
	margin-left: 30px;
	padding-left: 2px;
	border-right: 2px solid #e2e2e2;
	font-family: "Liberation Serif", serif;
	font-style: italic;
	font-size: 32px;
	line-height: 36px;
	color: #444;
}

.fval {
	margin-left: 15px;
	font-size: 28px;
	color: #222;
}

.tri-fb {
	margin: 0 16px 0 auto;
}

.sheet-wrap {
	position: relative;
	flex: none;
	height: 1655px;
	margin-top: 4px;
}

.sheet {
	height: 1655px;
	overflow: hidden;
}

.grid {
	width: 1356px;
	table-layout: fixed;
	border-collapse: collapse;
	font-size: 25.5px;
	color: #111;
}

.w-rn { width: 57px; }
.w-a { width: 130px; }
.w-b { width: 128px; }
.w-c { width: 224px; }
.w-d { width: 100px; }
.w-e { width: 124px; }
.w-f { width: 76px; }
.w-g { width: 252px; }
.w-h { width: 76px; }
.w-i { width: 76px; }
.w-j { width: 113px; }

.grid thead th {
	height: 51px;
	padding: 3px 0 0;
	background: linear-gradient(#fcfcfc, #f5f5f5);
	border-right: 1px solid #e3e3e3;
	border-bottom: 2px solid #b8b8b8;
	font-size: 27px;
	font-weight: 400;
	line-height: 34px;
	color: #555;
}

.grid thead .col-on {
	background: #efefef;
	border-bottom: 4px solid #1d6b3f;
	color: #1d6b3f;
}

.grid thead .col-j {
	padding-right: 18px;
	border-right: 0;
	text-align: right;
}

.corner i {
	display: block;
	width: 38px;
	height: 38px;
	margin-left: 14px;
	background: linear-gradient(135deg, transparent 50%, #d8d8d8 50%);
}

.grid .rn {
	height: 44px;
	padding: 0;
	background: #f6f6f6;
	border-right: 2px solid #bdbdbd;
	border-bottom: 1px solid #ececec;
	font-size: 28px;
	font-weight: 400;
	line-height: 34px;
	color: #666;
}

.grid .rn-on {
	background: #e8e8e8;
	border-right: 3px solid #1d6b3f;
	color: #1d6b3f;
}

.grid td {
	height: 44px;
	padding: 0 0 0 4px;
	border: 2px solid #000;
	line-height: 34px;
	word-spacing: 3px;
	white-space: nowrap;
	overflow: hidden;
}

.grid .j {
	border: 0;
}

.hd td {
	padding: 0;
	font-size: 25px;
	font-weight: 700;
	text-align: center;
}

.grid .f {
	background: linear-gradient(135deg, #0a7a0a 50%, transparent 50%) no-repeat 0 0 / 14px 14px;
}

.sel-cell {
	position: absolute;
	left: 760px;
	top: 443px;
	width: 82px;
	height: 50px;
	border: 3px solid #1d6b3f;
}

.sel-cell i {
	position: absolute;
	right: -6px;
	bottom: -6px;
	width: 8px;
	height: 8px;
	background: #1d6b3f;
}

.red-box {
	position: absolute;
	left: 1089px;
	top: 93px;
	width: 154px;
	height: 1563px;
	border: 4px solid #e03a0c;
	border-radius: 6px;
}

.tip {
	position: absolute;
	left: 972px;
	top: -27px;
	width: 320px;
	height: 68px;
	padding-left: 16px;
	background: #253656;
	border-radius: 8px;
	box-shadow: 0 2px 6px rgba(0, 0, 0, .2);
	font-size: 26.5px;
	line-height: 66px;
	color: #fff;
	white-space: nowrap;
}

.tip::after {
	content: "";
	position: absolute;
	left: 146px;
	top: 68px;
	border-left: 13px solid transparent;
	border-right: 13px solid transparent;
	border-top: 10px solid #444;
}

.sheetbar {
	display: flex;
	align-items: flex-start;
	flex: none;
	height: 52px;
	background: #ededed;
	border-top: 2px solid #c9c9c9;
}

.sb-prev,
.sb-next {
	width: 0;
	height: 0;
	margin-top: 14px;
	border-top: 11px solid transparent;
	border-bottom: 11px solid transparent;
}

.sb-prev {
	margin-left: 30px;
	border-right: 14px solid #bbb;
}

.sb-next {
	margin-left: 32px;
	border-left: 14px solid #bbb;
}

.sheet-tab {
	width: 357px;
	height: 44px;
	margin-left: 32px;
	background: #fff;
	border-radius: 0 0 6px 6px;
	box-shadow: 0 1px 2px rgba(0, 0, 0, .4);
	font-size: 25px;
	line-height: 40px;
	text-align: center;
	color: #2a8a55;
}

.sb-plus {
	margin: 12px 0 0 28px;
}

.sb-line {
	width: 1px;
	height: 40px;
	margin-left: 26px;
	background: #cfcfcf;
}

.status {
	display: flex;
	align-items: center;
	flex: none;
	height: 46px;
	background: linear-gradient(#dcdcdc, #d4d4d4);
	border-top: 2px solid #a9a9a9;
	border-radius: 0 0 24px 24px;
	font-size: 23px;
	color: #555;
}

.st-ready {
	margin: -2px 0 0 48px;
}

.st-macro {
	margin-left: 41px;
}

.st-acc {
	margin-left: 32px;
}

.st-q {
	font-family: "Noto Sans", sans-serif;
	fill: #555;
	stroke: none;
}

.st-text {
	margin: -2px 0 0 8px;
	white-space: nowrap;
}

.vw {
	display: flex;
	align-items: center;
	justify-content: center;
	width: 72px;
	height: 44px;
}

.vw-on {
	width: 74px;
	margin-left: auto;
	background: #a3a3a3;
}

.zm-minus {
	width: 16px;
	height: 5px;
	margin-left: 14px;
	background: #666;
}

.zm-track {
	display: flex;
	align-items: center;
	width: 200px;
	height: 8px;
	margin-left: 14px;
	background: #9a9a9a;
	border-radius: 4px;
}

.zm-knob {
	width: 32px;
	height: 32px;
	margin-left: 90px;
	background: #fff;
	border-radius: 50%;
}

.zm-plus {
	margin-left: 14px;
}

.zm-val {
	width: 146px;
	padding-left: 35px;
	font-size: 25px;
}

.flow {
	position: absolute;
	left: 468px;
	top: 1573px;
}
```
